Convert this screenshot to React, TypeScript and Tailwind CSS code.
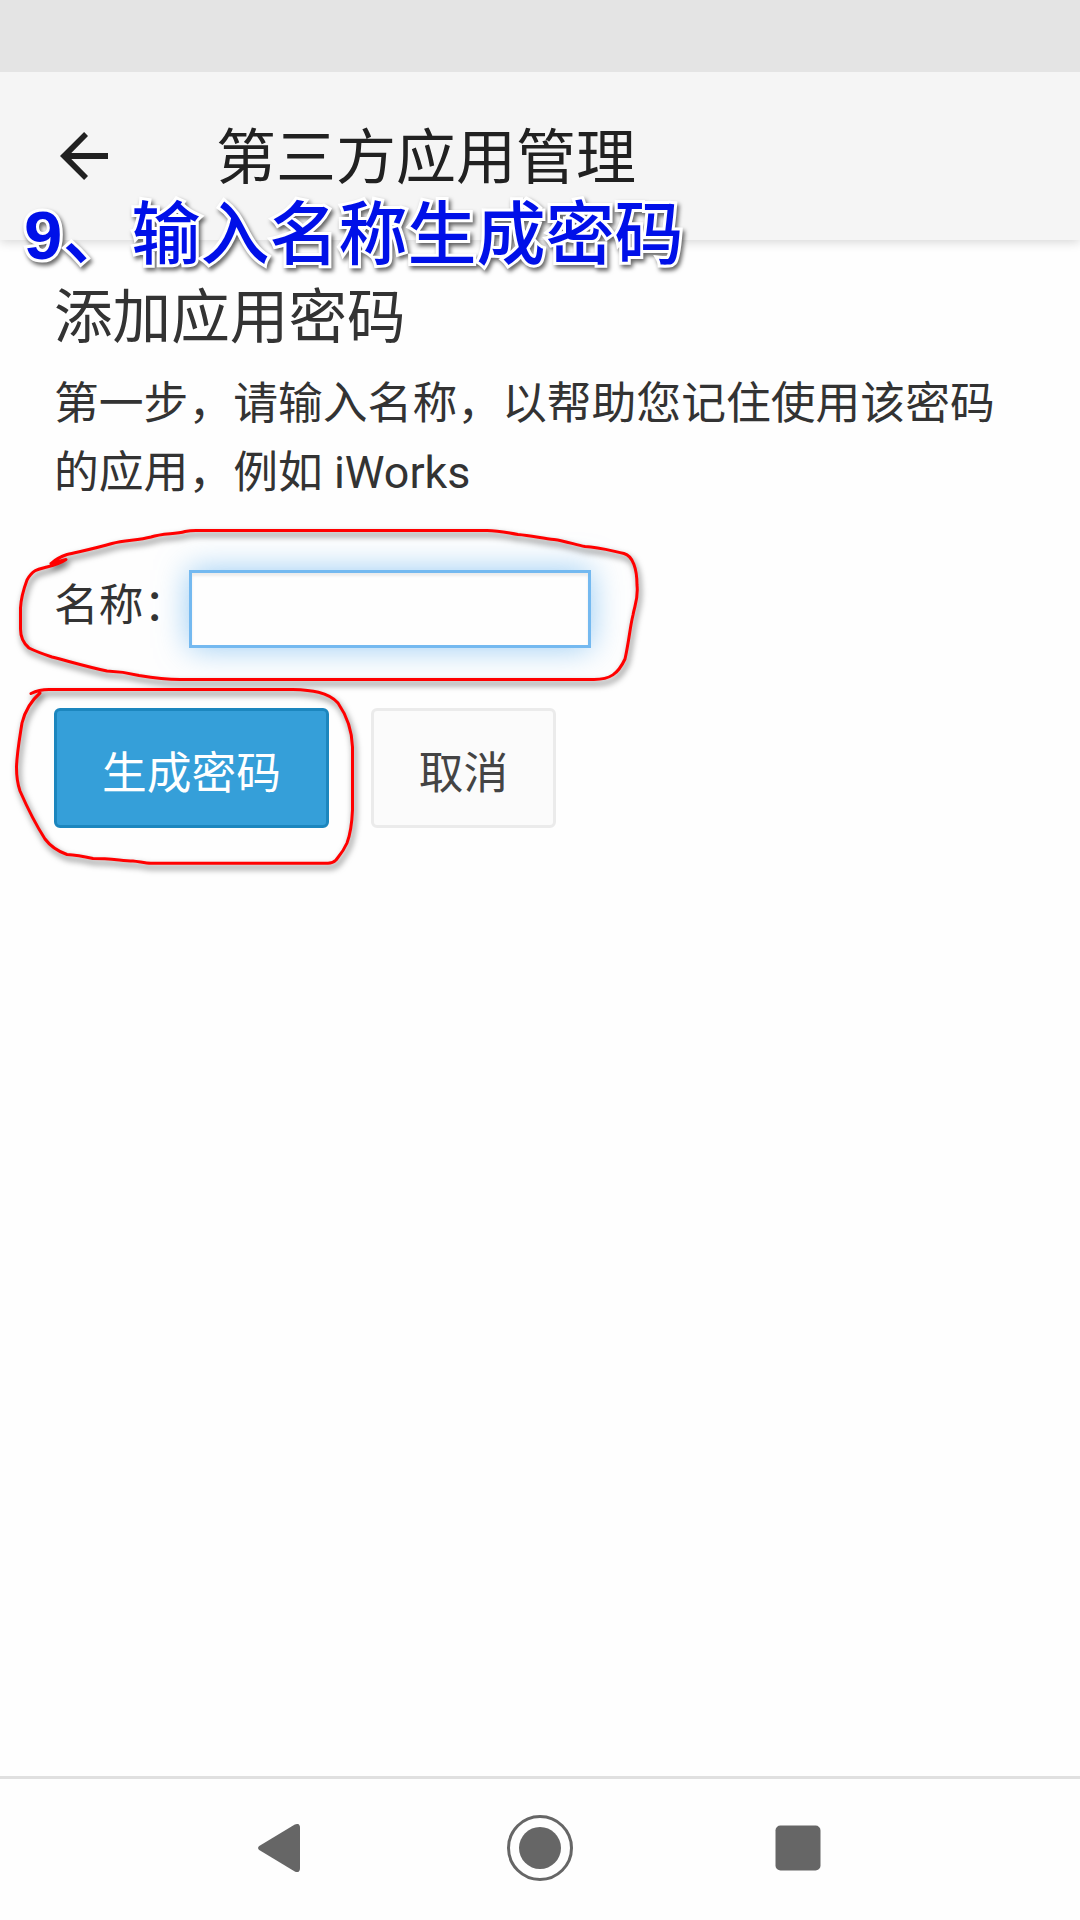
function AppHeader() {
  return (
    <header>
      <div className="relative z-10 h-[72px] bg-[#e4e4e4]" />
      <div className="flex h-[168px] items-center bg-[#f5f5f5] pl-[60px] shadow-[0_2px_10px_rgba(0,0,0,0.16)]">
        <svg className="h-12 w-12" viewBox="0 0 48 48" fill="#212121">
          <path d="M48 21H11.3L28 4.1 24.1 0 0 24l24.1 24 3.9-4.1L11.3 27H48z" />
        </svg>
        <h1 className="ml-[108px] pt-[5px] text-[60px] leading-[80px] text-[#212121]">第三方应用管理</h1>
      </div>
    </header>
  );
}

function StepCaption() {
  return (
    <div className="absolute left-[24px] top-[186px] whitespace-nowrap font-['Liberation_Sans','Noto_Sans_CJK_SC',sans-serif] text-[69px] leading-[100px] font-medium text-[#0010e8] [-webkit-text-stroke:6px_white] [paint-order:stroke_fill] [filter:drop-shadow(2px_3px_2px_rgba(0,0,0,0.6))]">
      <span className="font-bold">9</span>、输入名称生成密码
    </div>
  );
}

function PenMarks() {
  return (
    <svg
      className="pointer-events-none absolute left-0 top-[510px] h-[370px] w-[660px] [filter:drop-shadow(2px_4px_3px_rgba(0,0,0,0.6))]"
      viewBox="0 0 660 370"
      fill="none"
      stroke="#ff0000"
      strokeWidth="3"
      strokeLinecap="round"
      strokeLinejoin="round"
    >
      <path d="M51 53.500C56 49 61 46.500 67 44.500C82 41 97 38 112 33.500C125 30 138 30.500 151 27C163 23 175 24.500 185 21.500C190 20.500 192 20.500 196 20.500H487C500 20.500 508 23 518 24.500C531 25.500 543 28.500 554 29.500C565 31 575 34.500 585 36.500C599 37 612 41 624 43.500C633 46 637 59 637 75C638.500 88 635 94 633 105C630 117 629 131 625 149C618 164 610 169.500 594 169.500H180C165 169.500 154 168 139 165.500C129 163 123 161.500 107 161C84 156 68 151 52 147C43 144 36 141.500 29 138C23 133 20.500 125 20.500 119V98C21 88 24 78 27 70C33 59 39 59 47 57C55 55 61 53 66 49.500L51 53.500" />
      <path d="M31 183.500C36 181 41 179.500 49 179.500H293C311 180 328 182 338 193C347 206 352 221 352.500 237V300C352 312 350 325 347 333C343 342 339 346 336 350C334 352 332 353.300 328 353.300H151C145 353.300 139 351.500 133 351C121 350.500 110 348.500 93 348.500C84 346.500 76 345 67 344.500C57 341 51 337 45 329C36 315 27 297 20 281C16.500 271 16.500 265 16.500 257C17 242 20 226 22 213C25 201 32 190 40 183" />
    </svg>
  );
}

function NavigationBar() {
  return (
    <nav className="flex h-36 items-center border-t-[3px] border-[#e0e0e0] pb-[3px] text-[#666]">
      <svg className="ml-[258px] h-12 w-[42px]" viewBox="0 0 42 48" fill="currentColor">
        <path d="M1.200 22L36.800 .6Q42-1.600 42 4V44Q42 49.600 36.800 47.400L1.200 26Q-1.100 24 1.200 22Z" />
      </svg>
      <div className="ml-[207px] flex size-[66px] items-center justify-center rounded-full border-[3px] border-[#666]">
        <div className="size-[42px] rounded-full bg-[#666]" />
      </div>
      <svg className="ml-[202px] size-[46px]" viewBox="0 0 46 46" fill="currentColor">
        <rect x="0.5" y="0.5" width="45" height="45" rx="5" />
      </svg>
    </nav>
  );
}

export default function App() {
  return (
    <div className="relative flex h-[1920px] w-[1080px] flex-col overflow-hidden bg-[#fefefe] font-[Roboto,'Noto_Sans_CJK_SC',sans-serif] text-[#333]">
      <AppHeader />
      <main className="flex-1 px-[54px] pt-[38px]">
        <h2 className="text-[58.6px] leading-[80px]">添加应用密码</h2>
        <p className="mt-[11px] whitespace-nowrap text-[44.8px] leading-[69px]">
          第一步，请输入名称，以帮助您记住使用该密码
          <br />
          的应用，例如 iWorks
        </p>
        <div className="mt-[63px] flex h-[78px]">
          <label htmlFor="name" className="w-[135px] whitespace-nowrap pt-[2px] text-[44.7px] leading-[69px]">
            名称：
          </label>
          <input
            id="name"
            className="h-[78px] w-[402px] border-[3px] border-[#74b9f0] bg-[#fefefe] px-3 text-[40px] shadow-[0_0_32px_rgba(82,168,236,0.6),inset_0_3px_3px_rgba(0,0,0,0.075)] outline-none"
          />
        </div>
        <div className="mt-[60px] flex gap-[42px] text-[44.7px]">
          <button className="h-[120px] w-[275px] rounded-[6px] border-[3px] border-[#1c86be] bg-[#359fd9] pt-[12px] leading-[60px] text-white">
            生成密码
          </button>
          <button className="h-[120px] w-[185px] rounded-[6px] border-[3px] border-[#ebebeb] bg-[#fbfbfb] pt-[12px] leading-[60px] text-[#444]">
            取消
          </button>
        </div>
      </main>
      <NavigationBar />
      <PenMarks />
      <StepCaption />
    </div>
  );
}
